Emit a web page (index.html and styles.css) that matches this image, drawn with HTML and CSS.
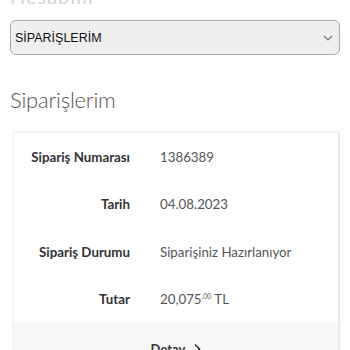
FILE: index.html
```html
<!DOCTYPE html>
<html lang="tr">
<head>
<meta charset="utf-8">
<link rel="stylesheet" href="styles.css">
</head>
<body>
<div class="page">
  <div class="crumb"><span class="crumb-text">Hesabım</span></div>
  <div class="select">
    <span class="select-text">SİPARİŞLERİM</span>
    <svg class="chev" width="10" height="6" viewBox="0 0 10 6"><path d="M1 1l4 4 4-4" fill="none" stroke="#777" stroke-width="1.2"/></svg>
  </div>
  <h1 class="title">Siparişlerim</h1>
  <div class="card">
    <div class="rows">
      <div class="label">Sipariş Numarası</div><div class="value">1386389</div>
      <div class="label">Tarih</div><div class="value">04.08.2023</div>
      <div class="label">Sipariş Durumu</div><div class="value">Siparişiniz Hazırlanıyor</div>
      <div class="label">Tutar</div><div class="value">20,075<sup class="dec">,00</sup> TL</div>
    </div>
    <div class="foot"><span class="detail">Detay</span><svg class="arr" width="8" height="12" viewBox="0 0 8 12"><path d="M2 1.5l4.5 4.5-4.5 4.5" fill="none" stroke="#333" stroke-width="1.6"/></svg></div>
  </div>
</div>
</body>
</html>
```
FILE: styles.css
```css
html, body { margin: 0; padding: 0; background: #fff; }
body { font-family: "Lato", "Open Sans", sans-serif; color: #555; overflow: hidden; height: 350px; }
.page { padding: 0 10px; }
.crumb { height: 4px; overflow: hidden; }
.crumb-text { display: block; font-size: 20px; line-height: 20px; margin-top: -14px; color: #d4d4d4; letter-spacing: 1px; }
.select {
  margin-top: 16px; height: 33px; border: 1px solid #a9a9a9; border-radius: 6px;
  background: #efefef; display: flex; align-items: center; justify-content: space-between;
  padding: 0 4px 0 4px;
}
.select-text { font-family: "Liberation Sans", Arial, sans-serif; font-size: 12.5px; color: #111; }
.chev { margin-right: 2px; }
.title { margin: 31px 0 0 0; font-size: 22px; font-weight: 300; color: #555; line-height: 28px; letter-spacing: -0.2px; }
.card {
  margin: 18px 0 0 3px; border: 1px solid #eee; border-right: 2px solid #eaeaea;
  box-shadow: 0 0 3px rgba(0,0,0,0.05);
}
.rows { display: grid; grid-template-columns: 116px 1fr; column-gap: 30px; grid-auto-rows: 47.5px; align-items: center; }
.label { text-align: right; font-weight: 700; font-size: 13.3px; color: #333; }
.value { font-size: 13.3px; color: #555; }
.dec { font-size: 7px; vertical-align: 5px; line-height: 0; }
.foot { background: #f7f7f7; padding: 18px 0 20px; display: flex; justify-content: center; align-items: center; gap: 8px; }
.detail { font-weight: 700; font-size: 13px; color: #333; }
```
